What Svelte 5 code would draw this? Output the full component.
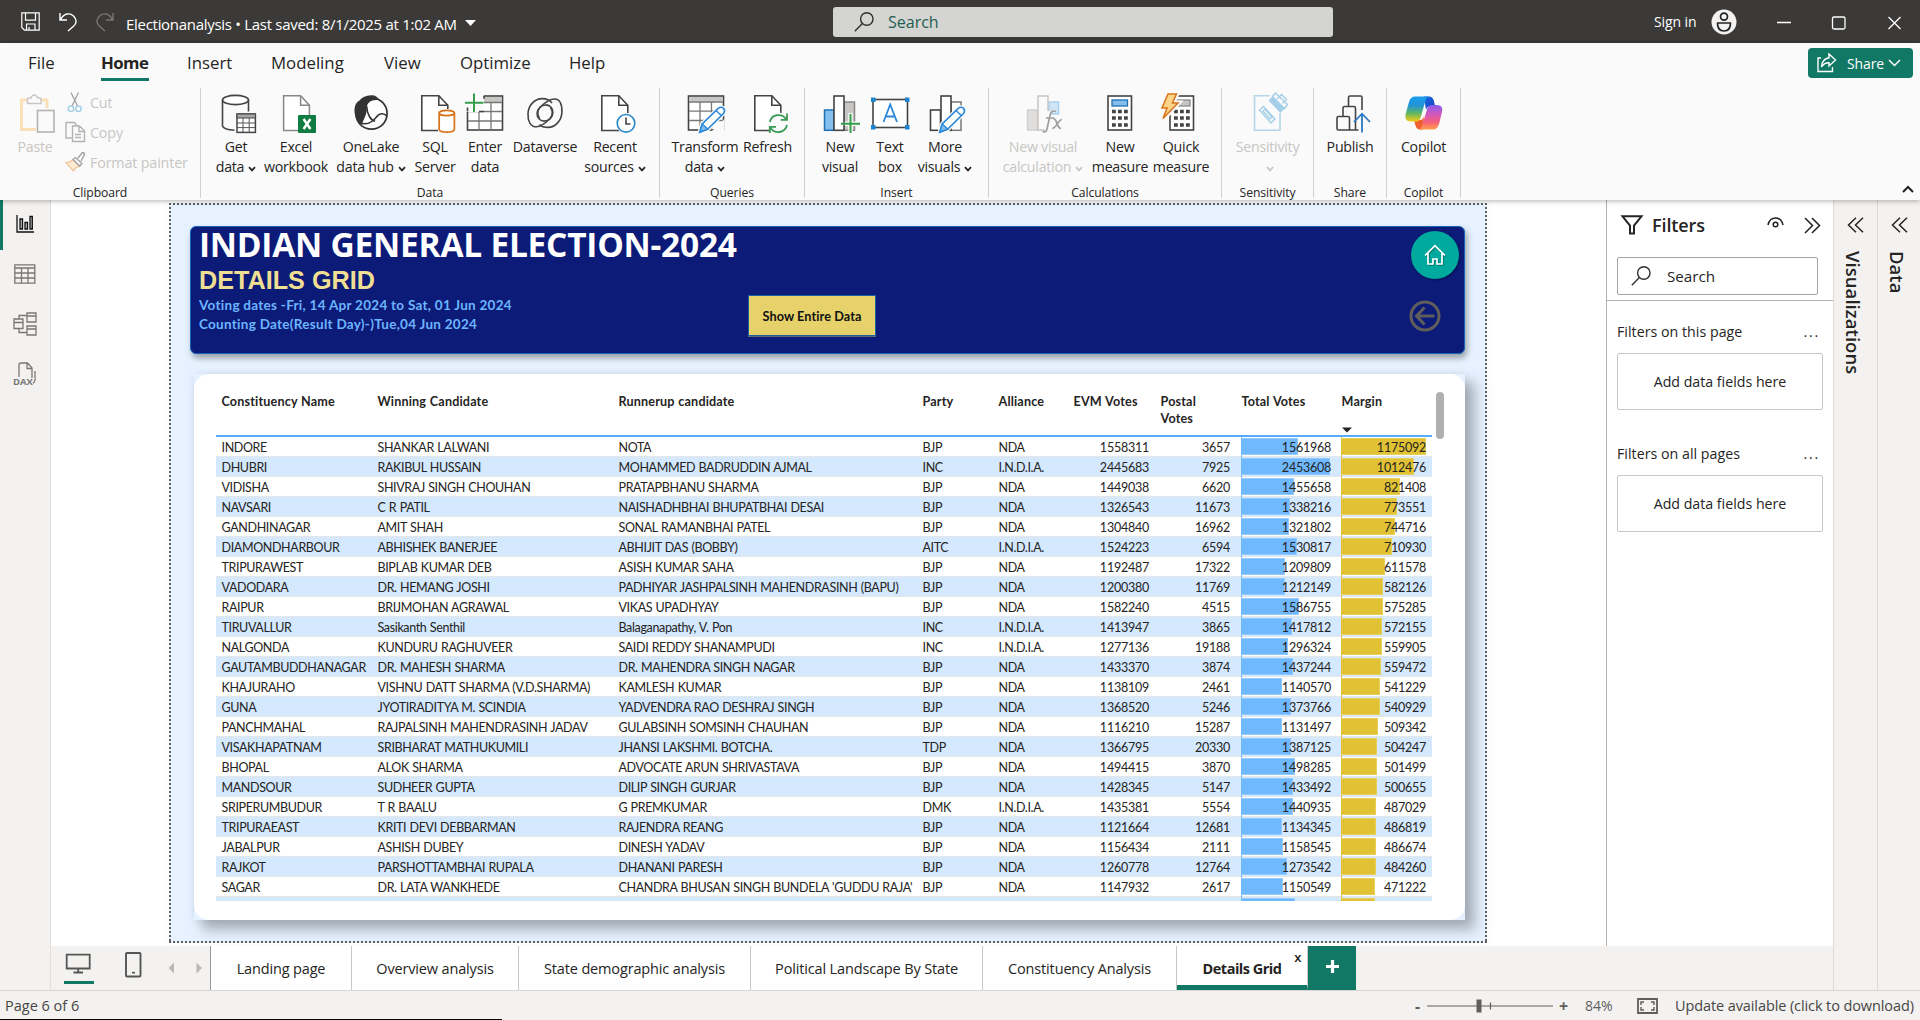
<script>
  const tabs = ['File', 'Home', 'Insert', 'Modeling', 'View', 'Optimize', 'Help'];

  const groups = [
    { name: 'Data', cls: 'g-data', items: [
      { icon: 'getdata', a: 'Get', b: 'data', menu: true, w: 60 },
      { icon: 'excel', a: 'Excel', b: 'workbook', w: 60 },
      { icon: 'onelake', a: 'OneLake', b: 'data hub', menu: true, w: 90 },
      { icon: 'sql', a: 'SQL', b: 'Server', w: 38 },
      { icon: 'enter', a: 'Enter', b: 'data', w: 62 },
      { icon: 'dataverse', a: 'Dataverse', w: 58 },
      { icon: 'recent', a: 'Recent', b: 'sources', menu: true, w: 82 }
    ] },
    { name: 'Queries', cls: 'g-queries', items: [
      { icon: 'transform', a: 'Transform', b: 'data', menu: true, w: 80 },
      { icon: 'refresh', a: 'Refresh', w: 45 }
    ] },
    { name: 'Insert', cls: 'g-insert', items: [
      { icon: 'newvisual', a: 'New', b: 'visual', w: 60 },
      { icon: 'textbox', a: 'Text', b: 'box', w: 40 },
      { icon: 'morevisuals', a: 'More', b: 'visuals', menu: true, w: 70 }
    ] },
    { name: 'Calculations', cls: 'g-calc', items: [
      { icon: 'newcalc', a: 'New visual', b: 'calculation', menu: true, off: true, w: 94 },
      { icon: 'measure', a: 'New', b: 'measure', w: 60 },
      { icon: 'quick', a: 'Quick', b: 'measure', w: 62 }
    ] },
    { name: 'Sensitivity', cls: 'g-sens', items: [{ icon: 'sensitivity', a: 'Sensitivity', b: '', menu: true, off: true, w: 91 }] },
    { name: 'Share', cls: 'g-share', items: [{ icon: 'publish', a: 'Publish', w: 72 }] },
    { name: 'Copilot', cls: 'g-copilot', items: [{ icon: 'copilot', a: 'Copilot', w: 73 }] }
  ];

  const rows = [
    ['INDORE', 'SHANKAR LALWANI', 'NOTA', 'BJP', 'NDA', 1558311, 3657, 1561968, 1175092],
    ['DHUBRI', 'RAKIBUL HUSSAIN', 'MOHAMMED BADRUDDIN AJMAL', 'INC', 'I.N.D.I.A.', 2445683, 7925, 2453608, 1012476],
    ['VIDISHA', 'SHIVRAJ SINGH CHOUHAN', 'PRATAPBHANU SHARMA', 'BJP', 'NDA', 1449038, 6620, 1455658, 821408],
    ['NAVSARI', 'C R PATIL', 'NAISHADHBHAI BHUPATBHAI DESAI', 'BJP', 'NDA', 1326543, 11673, 1338216, 773551],
    ['GANDHINAGAR', 'AMIT SHAH', 'SONAL RAMANBHAI PATEL', 'BJP', 'NDA', 1304840, 16962, 1321802, 744716],
    ['DIAMONDHARBOUR', 'ABHISHEK BANERJEE', 'ABHIJIT DAS (BOBBY)', 'AITC', 'I.N.D.I.A.', 1524223, 6594, 1530817, 710930],
    ['TRIPURAWEST', 'BIPLAB KUMAR DEB', 'ASISH KUMAR SAHA', 'BJP', 'NDA', 1192487, 17322, 1209809, 611578],
    ['VADODARA', 'DR. HEMANG JOSHI', 'PADHIYAR JASHPALSINH MAHENDRASINH (BAPU)', 'BJP', 'NDA', 1200380, 11769, 1212149, 582126],
    ['RAIPUR', 'BRIJMOHAN AGRAWAL', 'VIKAS UPADHYAY', 'BJP', 'NDA', 1582240, 4515, 1586755, 575285],
    ['TIRUVALLUR', 'Sasikanth Senthil', 'Balaganapathy, V. Pon', 'INC', 'I.N.D.I.A.', 1413947, 3865, 1417812, 572155],
    ['NALGONDA', 'KUNDURU RAGHUVEER', 'SAIDI REDDY SHANAMPUDI', 'INC', 'I.N.D.I.A.', 1277136, 19188, 1296324, 559905],
    ['GAUTAMBUDDHANAGAR', 'DR. MAHESH SHARMA', 'DR. MAHENDRA SINGH NAGAR', 'BJP', 'NDA', 1433370, 3874, 1437244, 559472],
    ['KHAJURAHO', 'VISHNU DATT SHARMA (V.D.SHARMA)', 'KAMLESH KUMAR', 'BJP', 'NDA', 1138109, 2461, 1140570, 541229],
    ['GUNA', 'JYOTIRADITYA M. SCINDIA', 'YADVENDRA RAO DESHRAJ SINGH', 'BJP', 'NDA', 1368520, 5246, 1373766, 540929],
    ['PANCHMAHAL', 'RAJPALSINH MAHENDRASINH JADAV', 'GULABSINH SOMSINH CHAUHAN', 'BJP', 'NDA', 1116210, 15287, 1131497, 509342],
    ['VISAKHAPATNAM', 'SRIBHARAT MATHUKUMILI', 'JHANSI LAKSHMI. BOTCHA.', 'TDP', 'NDA', 1366795, 20330, 1387125, 504247],
    ['BHOPAL', 'ALOK SHARMA', 'ADVOCATE ARUN SHRIVASTAVA', 'BJP', 'NDA', 1494415, 3870, 1498285, 501499],
    ['MANDSOUR', 'SUDHEER GUPTA', 'DILIP SINGH GURJAR', 'BJP', 'NDA', 1428345, 5147, 1433492, 500655],
    ['SRIPERUMBUDUR', 'T R BAALU', 'G PREMKUMAR', 'DMK', 'I.N.D.I.A.', 1435381, 5554, 1440935, 487029],
    ['TRIPURAEAST', 'KRITI DEVI DEBBARMAN', 'RAJENDRA REANG', 'BJP', 'NDA', 1121664, 12681, 1134345, 486819],
    ['JABALPUR', 'ASHISH DUBEY', 'DINESH YADAV', 'BJP', 'NDA', 1156434, 2111, 1158545, 486674],
    ['RAJKOT', 'PARSHOTTAMBHAI RUPALA', 'DHANANI PARESH', 'BJP', 'NDA', 1260778, 12764, 1273542, 484260],
    ['SAGAR', 'DR. LATA WANKHEDE', "CHANDRA BHUSAN SINGH BUNDELA 'GUDDU RAJA'", 'BJP', 'NDA', 1147932, 2617, 1150549, 471222],
    ['', '', '', '', '', '', '', 1480000, 470000]
  ];
  const maxTotal = 2453608;
  const maxMargin = 1175092;

  const pages = [
    { name: 'Landing page', w: 141 },
    { name: 'Overview analysis', w: 167 },
    { name: 'State demographic analysis', w: 232 },
    { name: 'Political Landscape By State', w: 232 },
    { name: 'Constituency Analysis', w: 194 }
  ];
</script>

{#snippet chev()}
  <svg class="chev" width="8" height="6" viewBox="0 0 8 6"><path d="M1 1.2 4 4.4 7 1.2" fill="none" stroke="currentColor" stroke-width="1.700" /></svg>
{/snippet}

{#snippet lens(s)}
  <svg width={s} height={s} viewBox="0 0 20 20" fill="none" stroke="#323130" stroke-width="1.4"><circle cx="12.8" cy="7" r="6.2" /><path d="M8.4 11.4.8 19.2" /></svg>
{/snippet}

{#snippet doc()}
  <path class="k" d="M6.8 2.8h17l9 9.5v25.2h-26z" fill="#fff" /><path class="k" d="M23.8 2.8v9.5h9" />
{/snippet}

{#snippet pencil()}
  <path d="M14.5 39.5 17 31 33.5 15.2q3-2 5 .2t.2 4.8L23 36.2z" fill="#fafafa" stroke="#fafafa" stroke-width="4" />
  <path d="M14.8 39.2 17.2 31 33.5 15.2q3-2 5 .2t.2 4.8L22.8 36z" fill="#fff" stroke="#2b88d8" stroke-width="1.6" />
  <path d="m14.8 39.2 2.4-8.2 5.6 5z" fill="#83beec" stroke="#2b88d8" stroke-width="1.4" /><path d="m31 17.5 5.5 5.2" stroke="#2b88d8" stroke-width="1.4" />
{/snippet}

{#snippet calc()}
  <rect class="k" x="8" y="3" width="23.5" height="34" fill="#fff" />
{/snippet}

{#snippet ribbonIcon(n)}
  <svg class="ico" width="40" height="40" viewBox="0 0 40 40" fill="none">
    {#if n === 'getdata'}
      <path class="k" d="M6.5 7v26q1 3.6 12 4.2M32.5 7v11.5" /><ellipse class="k" cx="19.5" cy="7" rx="13" ry="4.6" fill="#fff" />
      <rect x="21" y="21" width="18.4" height="18.4" fill="#fff" stroke="#444" stroke-width="1.5" /><rect x="21" y="21" width="18.4" height="4" fill="#a6a6a6" stroke="#444" stroke-width="1" />
      <path d="M27 25v14M33.2 25v14M21 30h18M21 34.6h18" stroke="#555" />
    {:else if n === 'excel'}
      <path d="M7.6 2.8h17l8.800 9.500v25.200H7.600z" fill="#fff" stroke="#8a8886" stroke-width="1.5" /><path d="M24.600 2.800v9.500h9" stroke="#8a8886" stroke-width="1.5" />
      <rect x="22" y="22" width="18" height="18" rx="1" fill="#107c41" /><path d="m27.600 26 6.800 10M34.400 26l-6.800 10" stroke="#fff" stroke-width="2.5" />
    {:else if n === 'onelake'}
      <circle cx="20.5" cy="20.5" r="15.6" stroke="#333" stroke-width="1.7" fill="#fff" />
      <path d="M20 2.2c4-.4 7 1.800 8.500 5C21 6 15.500 9 15.700 16c.1 6-2.700 9-4.700 15-6-4-8.500-10-7.200-17 .7-3.200 2.500-5.500 4.700-6.500C11 4.200 15 2.500 20 2.200z" fill="#333" />
      <path d="M15.600 13c.5 9 4.500 14.500 8.500 15.300M8 29.500c8 3.500 14-1 17-5 3-4.500 8-5 11-1" stroke="#333" stroke-width="1.600" />
    {:else if n === 'sql'}
      {@render doc()}
      <path d="M23 16h17v24H23z" fill="#fafafa" />
      <path d="M24.200 20v16.500q.8 2.600 7.600 2.600t7.600-2.600V20" stroke="#d8731a" stroke-width="1.700" fill="#fff" /><ellipse cx="31.800" cy="20" rx="7.600" ry="2.700" stroke="#d8731a" stroke-width="1.700" fill="#fff" />
    {:else if n === 'enter'}
      <rect class="k" x="2.500" y="3" width="35" height="34" fill="#fff" /><rect x="3.500" y="4" width="33.200" height="5" fill="#c8c6c4" />
      <path d="M3 9.500h34M3 18.500h34M3 28h34M14 9.500V37M26 9.500V37" stroke="#797775" stroke-width="1.300" />
      <path d="M-1 -1h20v20H-1z" fill="#fafafa" /><path class="k" d="M2.500 14.500v4M14 18.500h5M19 2.800v3" />
      <path d="M9 .5V19M0 9.700h18.500" stroke="#359f4c" stroke-width="2" />
    {:else if n === 'dataverse'}
      <path d="M14.500 25.500c-2.500-3.500-2.300-8.500.5-11.300 3-3 8-3 10.800-.2 3 3 3 8-1 11.800-3.500 3.500-8 8-13.300 8C5.500 34 2.600 28 3 20.500 3.400 12 10 5.600 17 5.600c4.500 0 8 1.500 10 4.500" class="k" />
      <path d="M25.500 14.500c2.500 3.500 2.300 8.500-.5 11.300-3 3-8 3-10.800.2-3-3-3-8 1-11.800C18.700 10.700 24 6 29.500 6c5.500 0 7.800 5.500 7.400 13.500C36.500 28 30 34.400 23 34.400c-4 0-7-1.200-8.500-3" class="k" />
    {:else if n === 'recent'}
      {@render doc()}
      <circle cx="31.500" cy="30.300" r="10.500" fill="#fafafa" /><circle cx="31" cy="30.300" r="8.800" fill="#fff" stroke="#2b88c8" stroke-width="1.600" /><path class="k" d="M31 24.500v6.500h4.500" />
    {:else if n === 'transform'}
      <rect class="k" x="3.500" y="3" width="35" height="34" fill="#fff" /><rect x="4" y="4" width="34" height="4.500" fill="#c8c6c4" />
      <path d="M4 9h34M4 18.200h34M4 27.500h34M15 9v28M26.500 9v28" stroke="#797775" stroke-width="1.300" />
      <path d="M27 38 39.500 26v14H27z" fill="#fafafa" />{@render pencil()}
    {:else if n === 'refresh'}
      {@render doc()}
      <circle cx="30.500" cy="30.500" r="11" fill="#fafafa" />
      <path d="M21.800 29a9 9 0 0 1 16.500-2.500M39 32a9 9 0 0 1-16.500 2.800M39 20.500v6.300h-6.200M21.800 40v-6.200H28" stroke="#3a9a55" stroke-width="1.800" />
    {:else if n === 'newvisual'}
      <rect x="4.500" y="17" width="9.500" height="20.300" fill="#83beec" stroke="#1f6fb2" stroke-width="1.500" />
      <rect x="24" y="9" width="10.500" height="28.300" fill="#c8c6c4" stroke="#8a8886" stroke-width="1.500" />
      <rect class="k" x="14" y="3" width="10" height="34.300" fill="#fff" />
      <path d="M30.500 20v21M24.800 30.800H41" stroke="#fafafa" stroke-width="4.500" />
      <path d="M30.500 21v19M21 30.800h19" stroke="#359f4c" stroke-width="2" />
    {:else if n === 'textbox'}
      <rect class="k" x="3" y="6.500" width="34.500" height="28" fill="#fff" />
      <path d="M1 4.500h4.500V9H1zM35 4.500h4.500V9H35zM1 32h4.500v4.500H1zM35 32h4.500v4.500H35z" fill="#1c84d0" />
      <path d="m13.500 29 6.700-17.500L27 29M15.800 23.500h9" stroke="#2b88d8" stroke-width="1.800" />
    {:else if n === 'morevisuals'}
      <rect class="k" x="5.500" y="17" width="10" height="20.300" fill="#fff" /><rect x="26" y="9" width="10" height="28.300" fill="#fff" stroke="#797775" stroke-width="1.500" /><rect class="k" x="16" y="3" width="10" height="34.300" fill="#fff" />
      {@render pencil()}
    {:else if n === 'newcalc'}
      <rect x="4.500" y="17" width="10" height="20" fill="#e1dfdd" stroke="#d2d0ce" stroke-width="1.500" /><rect x="26" y="9" width="9.500" height="12" fill="#cfe6f8" stroke="#a9d0ee" stroke-width="1.500" /><rect x="15" y="3" width="10" height="34" fill="#fafafa" stroke="#c8c6c4" stroke-width="1.500" />
      <path d="M21 18h7v22h-6z" fill="#fafafa" />
      <path d="M33 18.500q-5-2-6 4l-3 13.500q-.8 4-4.500 2.500M23 25h8.500M30.500 26.500c3.500-2 3 9 7.500 9M38.800 26.500c-3 0-6 9-9.500 9" stroke="#a19f9d" stroke-width="1.700" />
    {:else if n === 'measure'}
      {@render calc()}
      <rect x="12" y="7" width="15.500" height="6" fill="#83beec" stroke="#1f6fb2" stroke-width="1.300" />
      <path d="M12 18.500h16M12 25h16M12 32h16" stroke="#444" stroke-width="3.600" stroke-dasharray="3.800 2.200" />
    {:else if n === 'quick'}
      <g transform="translate(1 0)">{@render calc()}<rect x="14" y="7" width="14" height="6" fill="#c8c6c4" stroke="#8a8886" stroke-width="1.300" /><path d="M12 18.500h16M12 25h16M12 32h16" stroke="#444" stroke-width="3.600" stroke-dasharray="3.800 2.200" /></g>
      <path d="M7 .8h9L11.500 10H17L1.500 27 6 15H1z" fill="#fafafa" stroke="#fafafa" stroke-width="5" />
      <path d="M7 1h8.500L11.500 10H17L2 25.500 6 15H1z" fill="#fbd48a" stroke="#d8731a" stroke-width="1.500" />
    {:else if n === 'sensitivity'}
      <path d="M22 2.800H6.500v34.500h25.500V20" stroke="#b3d6ea" stroke-width="1.600" fill="#fafafa" />
      <path d="m11.500 17 4-3.500 11.500 12.500-4 4zM15 18l2-1.800 7 8-2 1.800z" stroke="#a5cfe8" stroke-width="1.400" />
      <path d="m20.500 7.500 4-4 12 12-4 4.500z" fill="#a5cfe8" /><path d="m24.500 3.500 3-3.500 12 11.500-3 4zM29 6l4.500-4.500 5 5-4 4" stroke="#a5cfe8" stroke-width="1.500" fill="#fafafa" />
    {:else if n === 'publish'}
      <path class="k" d="M28.500 37H8.500q-1.500 0-1.500-1.500V25q0-1.500 1.500-1.500H18q1.500 0 1.500 1.500v12M13 23V15q0-1.500 1.500-1.500H24q1.500 0 1.500 1.500v22M18.500 13V4.500Q18.500 3 20 3h10.500Q32 3 32 4.500V17" />
      <path d="M32 21v18.500M24 29l8-8.300 8 8.300" stroke="#2b79c2" stroke-width="1.800" />
    {:else if n === 'copilot'}
      <defs>
        <linearGradient id="ca" x1="0" y1="0" x2="0" y2="1"><stop offset="0" stop-color="#1b9df0" /><stop offset=".35" stop-color="#1f93d8" /><stop offset=".65" stop-color="#5bb56a" /><stop offset="1" stop-color="#f5cd12" /></linearGradient>
        <linearGradient id="cb" x1="0" y1="0" x2="0" y2="1"><stop offset="0" stop-color="#8a5cf0" /><stop offset=".4" stop-color="#d657b8" /><stop offset=".7" stop-color="#f7607a" /><stop offset="1" stop-color="#ffa04a" /></linearGradient>
        <linearGradient id="cc" x1="0" y1="0" x2="1" y2="1"><stop offset="0" stop-color="#1468e0" /><stop offset="1" stop-color="#1b3fc4" /></linearGradient>
      </defs>
      <path d="M20 3.500h5q3.500 0 4.800 4l1.200 5.500h-4q-4 0-5 4z" fill="url(#cc)" />
      <path d="M19 36.500h-3q-3.500 0-4.500-4L10 27h6q3 0 4-4z" fill="#f0602f" />
      <path d="M11 3.500h14q-2.500.5-3.500 4L16.500 25q-1 3.500-4.500 3.500H6.500q-6 0-5-7L5 9q1.500-5.500 6-5.500z" fill="url(#ca)" />
      <path d="M29 36.500H14.500q2.500-.5 3.500-4L23.500 15q1-3 4.500-3h5q6.500 0 5 7L35 31q-1.500 5.500-6 5.500z" fill="url(#cb)" />
    {/if}
  </svg>
{/snippet}

<div class="app">
  <header class="titlebar">
    <div class="quick">
      <svg width="19" height="19" viewBox="0 0 19 19" fill="none" stroke="#fff" stroke-width="1.200"><path d="M.8.8h17.400v17.400H3.500L.8 15.500zM4.500.8v7.400h10V.8M5.500 18v-6h8.500v6M8 15v3" /></svg>
      <svg width="18" height="20" viewBox="0 0 18 20" fill="none" stroke="#fff" stroke-width="1.400"><path d="M1 1v7h7M1.500 7.500C5 1 11 .5 14.500 4s3.500 7 0 10.200L9 19" /></svg>
      <svg width="18" height="20" viewBox="0 0 18 20" fill="none" stroke="#797775" stroke-width="1.400"><path d="M17 1v7h-7M16.500 7.500C13 1 7 .5 3.500 4S0 11 3.500 14.200L9 19" /></svg>
    </div>
    <div class="docname">Electionanalysis • Last saved: 8/1/2025 at 1:02 AM</div>
    <svg class="caret" width="11" height="6" viewBox="0 0 11 6"><path d="M0 0h11L5.500 6z" fill="#fff" /></svg>
    <div class="search">{@render lens(20)}<span>Search</span></div>
    <div class="signin">Sign in</div>
    <svg width="26" height="26" viewBox="0 0 26 26"><circle cx="13" cy="13" r="12.500" fill="#f3f2f1" /><circle cx="13" cy="7.600" r="3.500" fill="none" stroke="#222" stroke-width="1.700" /><path d="M6.500 14h13q0 8-6.500 8t-6.500-8z" fill="none" stroke="#222" stroke-width="1.700" stroke-linejoin="round" /></svg>
    <svg class="wc" width="125" height="16" viewBox="0 0 125 16" fill="none" stroke="#fff" stroke-width="1.300"><path d="M0 7.500h14M111.500 2l12 12M123.500 2l-12 12" /><rect x="55.500" y="2" width="12.500" height="12" rx="1.500" /></svg>
  </header>

  <section class="ribbon">
    <nav class="tabs">
      {#each tabs as t}<div class="tab t-{t.toLowerCase()}" class:on={t === 'Home'}>{t}</div>{/each}
      <div class="share">
        <svg width="20" height="20" viewBox="0 0 20 20" fill="none" stroke="#fff" stroke-width="1.400"><path d="M4 5H1v13.500h14.500V14M12 1l6.500 6L12 13V9.700Q7 9.500 4.500 14 5 6 12 4.800z" /></svg>
        <span>Share</span>
        <svg width="13" height="8" viewBox="0 0 13 8" fill="none" stroke="#fff" stroke-width="1.500"><path d="m1 1 5.500 5.500L12 1" /></svg>
      </div>
    </nav>
    <div class="groups">
      <div class="group g-clip">
        <div class="items">
          <div class="item off paste">
            <svg class="ico" width="40" height="40" viewBox="0 0 40 40" fill="none">
              <path d="M21 36.500H6.500V7H32v8" stroke="#fadfb8" stroke-width="3" /><path d="M12.500 10.500V6q0-1 1.500-1h2q1-3 3.300-3t3.300 3h2q1.500 0 1.500 1v4.500z" fill="#fafafa" stroke="#c8c6c4" stroke-width="1.500" /><rect x="22.500" y="17.500" width="16.500" height="21.500" fill="#fafafa" stroke="#b5b3b1" stroke-width="1.600" />
            </svg>
            <span>Paste</span>
          </div>
          <div class="clip off">
            <div><svg width="20" height="22" viewBox="0 0 20 22" fill="none"><path d="M6 1.500 12.500 15M13.500 1.500 7 15" stroke="#a19f9d" stroke-width="1.300" /><circle cx="6" cy="17.700" r="2.700" stroke="#a5cfe8" stroke-width="1.500" /><circle cx="13.500" cy="17.700" r="2.700" stroke="#a5cfe8" stroke-width="1.500" /></svg><span>Cut</span></div>
            <div><svg width="20" height="22" viewBox="0 0 20 22" fill="none" stroke="#b5b3b1" stroke-width="1.400"><path d="M7 17H1V1.500h8.500L12 5" /><path d="M7.500 5h7l5 5v10.500h-12zM14 5v5.500h5.500M10 13.500h6M10 16.500h6" /></svg><span>Copy</span></div>
            <div><svg width="20" height="22" viewBox="0 0 20 22" fill="none" stroke-width="1.300"><path d="M1 11.500q4 .5 7-3l7 6.500q-5 1-6.500 5z" fill="#fdebd3" stroke="#eec8a0" /><path d="m8 8.500 2.500-2 6.500 6-2.500 2.500zM13 7l4.500-5.500q2 0 2 2L16 10" fill="#fafafa" stroke="#a19f9d" /></svg><span>Format painter</span></div>
          </div>
        </div>
        <div class="gname">Clipboard</div>
      </div>
      {#each groups as g}
        <div class="group {g.cls}">
          <div class="items">
            {#each g.items as it}
              <div class="item" class:off={it.off} style:width="{it.w}px">
                {@render ribbonIcon(it.icon)}
                <span>{it.a}</span>
                {#if it.b !== undefined}<span>{it.b}{#if it.menu}{@render chev()}{/if}</span>{/if}
              </div>
            {/each}
          </div>
          <div class="gname">{g.name}</div>
        </div>
      {/each}
      <svg class="collapse" width="12" height="8" viewBox="0 0 12 8" fill="none" stroke="#222" stroke-width="2"><path d="m1 7 5-5 5 5" /></svg>
    </div>
  </section>

  <div class="body">
    <aside class="rail">
      <div class="r on"><svg width="18" height="18" viewBox="0 0 18 18" fill="none" stroke="#111" stroke-width="1.300"><path d="M1 0v17h17" /><path d="M4 4h2.500v10H4zM9 7.500h2.500V14H9zM14 1.500h2.300V14H14z" fill="#bbb" /></svg></div>
      <div class="r"><svg width="22" height="20" viewBox="0 0 22 20" fill="none" stroke="#797775" stroke-width="1.300"><path d="M.8.8h20v18.400H.8zM.8 4h20M.8 9h20M.8 14h20M7.500 4v15M14 4v15" /></svg></div>
      <div class="r"><svg width="24" height="24" viewBox="0 0 24 24" fill="none" stroke="#797775" stroke-width="1.300"><path d="M1 7h9v9.500H1zM1 10.500h9M14 1h9v9h-9zM14 4h9M14 14h9v9h-9zM14 17h9M6 7V3.500h8M6 16.500v4h8" /></svg></div>
      <div class="r"><svg width="24" height="24" viewBox="0 0 24 24" fill="none" stroke="#797775" stroke-width="1.300"><path d="M6 15V3q0-2 2-2h6.500L19 6v9q0 2-1.500 3M14 1v5.500h5M22 9v8q0 4-4 5.500" /><text x="0" y="22.500" class="dax">DAX</text></svg></div>
    </aside>

    <main class="main">
      <div class="upper">
        <div class="stage">
          <div class="page">
            <div class="banner">
              <div class="titles">
                <h1>INDIAN GENERAL ELECTION-2024</h1>
                <h2>DETAILS GRID</h2>
                <p>Voting dates -Fri, 14 Apr 2024 to Sat, 01 Jun 2024</p>
                <p>Counting Date(Result Day)-)Tue,04 Jun 2024</p>
              </div>
              <button class="showall">Show Entire Data</button>
              <div class="navs">
                <div class="home"><svg width="22" height="22" viewBox="0 0 22 22" fill="none" stroke="#fff" stroke-width="1.700"><path d="M1 11.500 11 1.700l10 9.800M4 9v11h5v-5h4v5h5V9" /></svg></div>
                <svg class="back" width="32" height="32" viewBox="0 0 32 32" fill="none" stroke="#605e5c" stroke-width="3"><circle cx="16" cy="16" r="14" /><path d="M25.500 16H8M15.500 7.500 7.500 16l8 8.500" /></svg>
              </div>
            </div>
            <div class="cardbox">
              <div class="card">
                <div class="grid">
                  <div class="row head">
                    <div>Constituency Name</div><div>Winning Candidate</div><div>Runnerup candidate</div><div>Party</div><div>Alliance</div><div>EVM Votes</div><div>Postal<br />Votes</div><div>Total Votes</div>
                    <div class="sorted">Margin<svg width="10" height="6" viewBox="0 0 10 6"><path d="M0 .5h10L5 5.500z" fill="#222" /></svg></div>
                  </div>
                  {#each rows as r, i}
                    <div class="row" class:alt={i % 2 === 1}>
                      {#each r as c, j}
                        {#if j < 5}<div>{c}</div>
                        {:else if j < 7}<div class="num">{c}</div>
                        {:else if j === 7}<div class="num barcell blue"><i class="bar" style:width="{(c / maxTotal) * 89}px"></i><span>{r[0] ? c : ''}</span></div>
                        {:else}<div class="num barcell gold"><i class="bar" style:width="{(c / maxMargin) * 85}px"></i><span>{r[0] ? c : ''}</span></div>{/if}
                      {/each}
                    </div>
                  {/each}
                </div>
                <div class="thumb"></div>
              </div>
            </div>
          </div>
        </div>
        <aside class="filters">
          <div class="fhead">
            <svg width="22" height="20" viewBox="0 0 22 20" fill="none" stroke="#252423" stroke-width="2"><path d="M1.500 1.300h19L13 10.500V18.500H9v-8z" /></svg>
            <b>Filters</b>
            <svg class="eye" width="17" height="11" viewBox="0 0 17 11" fill="none" stroke="#252423" stroke-width="1.500"><path d="M1 8Q2.500 1 8.500 1T16 8" /><circle cx="8.500" cy="7.500" r="2.300" /></svg>
            <svg width="17" height="17" viewBox="0 0 17 17" fill="none" stroke="#252423" stroke-width="1.500"><path d="m1 1 7.500 7.500L1 16M8 1l7.500 7.500L8 16" /></svg>
          </div>
          <div class="fsearch">{@render lens(20)}<span>Search</span></div>
          <div class="frule"></div>
          <div class="flabel"><span>Filters on this page</span><i>...</i></div>
          <div class="fbox">Add data fields here</div>
          <div class="flabel second"><span>Filters on all pages</span><i>...</i></div>
          <div class="fbox">Add data fields here</div>
        </aside>
      </div>
      <div class="pages">
        <div class="devices">
          <svg class="mon" width="30" height="32" viewBox="0 0 30 32" fill="none"><path d="M2.700 2.700h23v13.800h-23zM14.200 16.500v4M9.500 20.500h9.500" stroke="#555" stroke-width="1.800" /><path d="M0 29h30v3H0z" fill="#117865" /></svg>
          <svg class="phone" width="17" height="26" viewBox="0 0 17 26" fill="none"><rect x="1" y="1" width="14.500" height="23.500" rx="1" stroke="#555" stroke-width="1.900" /><path d="M7 20.700h3" stroke="#555" stroke-width="1.600" /></svg>
          <svg class="arrows" width="35" height="12" viewBox="0 0 35 12" fill="#bbb9b7"><path d="M6 .5v11L.5 6zM28.500.5v11L34 6z" /></svg>
        </div>
        {#each pages as p}<div class="pg" style:width="{p.w}px">{p.name}</div>{/each}
        <div class="pg active">Details Grid<span class="x">x</span></div>
        <div class="plus"><svg width="13" height="13" viewBox="0 0 13 13"><path d="M6.500 0v13M0 6.500h13" stroke="#fff" stroke-width="3.200" /></svg></div>
      </div>
    </main>

    {#each ['Visualizations', 'Data'] as pane}
      <aside class="pane">
        <svg width="17" height="16" viewBox="0 0 17 16" fill="none" stroke="#252423" stroke-width="1.500"><path d="M9 .8 1.500 8 9 15.200M16 .8 8.500 8l7.500 7.200" /></svg>
        <b>{pane}</b>
      </aside>
    {/each}
  </div>

  <footer class="status">
    <span class="pgno">Page 6 of 6</span>
    <div class="zoom">
      <b>-</b>
      <svg width="126" height="14" viewBox="0 0 126 14"><path d="M0 7h126M63.500 3.500v7" stroke="#605e5c" stroke-width="1.200" /><path d="M49.500.500h5v13h-5z" fill="#605e5c" /></svg>
      <b class="pl">+</b>
      <span>84%</span>
    </div>
    <svg class="fit" width="21" height="16" viewBox="0 0 21 16" fill="none" stroke="#605e5c"><path d="M1 1h19v14H1z" stroke-width="1.800" /><path d="M7 4H4v3M14 4h3v3M7 12H4V9M14 12h3V9" stroke-width="1.400" /></svg>
    <span class="upd">Update available (click to download)</span>
    <div class="progress"></div>
  </footer>
</div>

<style>
  :global(body) { margin: 0; overflow: hidden; }
  .app { width: 1920px; height: 1020px; display: flex; flex-direction: column; overflow: hidden; font-family: 'Open Sans', 'Noto Sans', sans-serif; color: #252423; background: #fff; white-space: nowrap; box-sizing: border-box; }
  .app :global(*) { box-sizing: border-box; }
  svg { display: block; flex: none; overflow: visible; }

  .titlebar { height: 43px; flex: none; background: #3b3a38; color: #fff; display: flex; align-items: center; font-size: 14px; }
  .quick { display: flex; gap: 19px; margin-left: 21px; width: 105px; align-items: center; }
  .docname { width: 331px; font-size: 15px; letter-spacing: -0.29px; padding-top: 5px; }
  .caret { margin-left: 8px; margin-top: 3px; }
  .search { margin-left: 357px; width: 500px; height: 30px; background: #d4d4d2; border-radius: 3px; display: flex; align-items: center; color: #1f5c4f; font-size: 16px; letter-spacing: 0; }
  .search svg { margin-left: 21px; margin-right: 14px; }
  .signin { margin-left: 321px; width: 57px; letter-spacing: -0.1px; }
  .wc { margin-left: 40px; margin-top: 3px; }

  .ribbon { height: 157px; flex: none; background: #fafafa; position: relative; z-index: 2; box-shadow: 0 1px 5px rgba(0, 0, 0, 0.3); }
  .tabs { height: 45px; display: flex; align-items: flex-start; padding-left: 28px; font-size: 16.800px; }
  .tab { height: 38px; line-height: 39px; letter-spacing: 0; }
  .tab.on { font-weight: 700; border-bottom: 3px solid #117865; letter-spacing: -0.6px; }
  .t-file { width: 73px; }
  .t-home { width: 48px; margin-right: 38px; }
  .t-insert { width: 84px; }
  .t-modeling { width: 113px; }
  .t-view { width: 76px; }
  .t-optimize { width: 109px; }
  .t-help { width: 60px; }
  .share { margin-left: auto; margin-right: 7px; margin-top: 5px; width: 105px; height: 30px; border-radius: 4px; background: #117865; color: #fff; display: flex; align-items: center; font-size: 14px; letter-spacing: -0.1px; padding-left: 9px; }
  .share span { margin-left: 10px; margin-right: 4px; }

  .groups { display: flex; height: 110px; }
  .group { border-right: 1px solid #d2d0ce; display: flex; flex-direction: column; }
  .g-clip { width: 201px; }
  .g-data { width: 459px; }
  .g-data .items { padding-left: 5px; }
  .g-queries { width: 145px; }
  .g-queries .items { padding-left: 5px; }
  .g-insert { width: 184px; }
  .g-insert .items { padding-left: 5px; }
  .g-calc { width: 233px; }
  .g-calc .items { padding-left: 7px; }
  .g-sens { width: 92px; }
  .g-share { width: 73px; }
  .g-copilot { width: 74px; }
  .items { display: flex; height: 94px; padding-top: 5px; }
  .item { display: flex; flex-direction: column; align-items: center; font-size: 14.200px; letter-spacing: -0.25px; line-height: 20px; flex: none; }
  .item span { display: flex; align-items: center; height: 20px; }
  .ico { margin-bottom: 4px; }
  .chev { margin-left: 4px; margin-top: 4px; }
  .off { color: #c8c6c4; }
  .gname { text-align: center; font-size: 12.200px; letter-spacing: -0.1px; line-height: 16px; margin-top: 3px; height: 13px; }
  .paste { width: 70px; }
  .clip { font-size: 14.300px; letter-spacing: -0.15px; margin: -6px 0 0 -5px; }
  .clip div { display: flex; height: 30px; align-items: center; gap: 5px; }
  .collapse { margin-left: auto; align-self: flex-end; margin-right: 6px; margin-bottom: 5px; }
  .k { stroke: #444; stroke-width: 1.600; }

  .body { height: 791px; flex: none; display: flex; border-bottom: 1px solid #d8d6d4; }
  .rail { width: 51px; background: #f3f2f1; border-right: 1px solid #e1dfdd; }
  .r { height: 50px; display: flex; align-items: center; justify-content: center; }
  .r.on { border-left: 3px solid #117865; padding-right: 3px; }
  .r svg { margin-top: -2px; }
  .dax { font: 700 9.500px 'Open Sans', sans-serif; fill: #797775; stroke: #f3f2f1; stroke-width: 2px; paint-order: stroke; }

  .main { flex: 1; display: flex; flex-direction: column; }
  .upper { height: 746px; display: flex; }
  .stage { flex: 1; padding: 3px 0 0 118px; }
  .page { width: 1318px; height: 740px; padding: 23px 22px 0 21px; background:
      repeating-linear-gradient(90deg, #5f5f5f 0 2px, transparent 2px 4px) 0 0 / 100% 2px no-repeat,
      repeating-linear-gradient(90deg, #5f5f5f 0 2px, transparent 2px 4px) 0 100% / 100% 2px no-repeat,
      repeating-linear-gradient(#5f5f5f 0 2px, transparent 2px 4px) 0 0 / 2px 100% no-repeat,
      repeating-linear-gradient(#5f5f5f 0 2px, transparent 2px 4px) 100% 0 / 2px 100% no-repeat,
      #e6f2ff; box-shadow: 0 0 14px rgba(0, 0, 0, 0.03); }
  .banner { height: 128px; background: #0c1b77; border: 1px solid #1464b8; border-radius: 6px; box-shadow: 2px 4px 6px rgba(0, 0, 0, 0.35); display: flex; }
  .titles { width: 557px; padding-left: 8px; }
  h1 { margin: 0; color: #fff; font-size: 33.500px; line-height: 35px; font-weight: 700; letter-spacing: -0.25px; }
  h2 { margin: 3px 0 1px; color: #f0df92; font: 700 25.200px/30px 'Liberation Sans', Arial, sans-serif; }
  p { margin: 0; color: #6cb5ff; font: 700 13.500px/19px Lato, sans-serif; letter-spacing: 0.28px; }
  .showall { width: 128px; height: 41px; margin-top: 68px; padding: 0; border: 1px solid #1b5f9e; box-shadow: 0 1px 0 #5f6b74; background: #e6d16a; font: 700 12.700px Lato, sans-serif; letter-spacing: 0.08px; color: #111; white-space: nowrap; }
  .navs { margin-left: auto; margin-right: 5px; padding-top: 4px; }
  .home { width: 48px; height: 48px; border-radius: 50%; background: #00a99d; display: flex; align-items: center; justify-content: center; box-shadow: 1px 1px 2px #061050; }
  .home svg { filter: drop-shadow(1px 1px 0 rgba(0, 0, 0, 0.3)); }
  .back { margin-top: 21px; margin-left: -2px; }

  .cardbox { height: 546px; margin: 20px 0 0 4px; background: #e6f2ff; box-shadow: 9px 9px 12px 1px rgba(0, 0, 0, 0.27), 0 0 9px rgba(0, 0, 0, 0.08); }
  .card { height: 546px; border-radius: 15px; background: #fff; display: flex; padding: 18px 0 0 22px; }
  .grid { width: 1216px; height: 509px; overflow: hidden; font-family: Lato, Carlito, sans-serif; font-size: 12.500px; letter-spacing: -0.36px; word-spacing: 0.5px; }
  .row { display: grid; grid-template-columns: 156px 241px 304px 76px 75px 87px 81px 100px 95px; height: 20px; line-height: 21px; border-bottom: 1px solid #e4e6e8; }
  .row > div { padding-left: 5.500px; }
  .row > .num { text-align: right; padding: 0 6px 0 0; letter-spacing: -0.23px; }
  .alt { background: #d4e8fe; }
  .head { height: 45px; border-bottom: 2px solid #58acff; line-height: 17px; font-size: 12.600px; font-weight: 700; letter-spacing: 0.16px; }
  .row.head > div { padding-top: 1px; }
  .row.head .sorted svg { margin-top: 17px; }
  .row > .barcell { display: grid; padding: 0 5px 0 5px; }
  .barcell > * { grid-area: 1 / 1; }
  .bar { height: 17px; margin-top: 1px; display: block; }
  .blue { background: linear-gradient(#70b9ff, #70b9ff) 5px 0 / 1px 100% no-repeat; }
  .gold { background: linear-gradient(#e0c234, #e0c234) 5px 0 / 1px 100% no-repeat; }
  .blue .bar { background: #70b9ff; border: 1px solid #92caff; border-left: 0; }
  .gold .bar { background: #e0c234; border: 1px solid #e8cf5a; border-left: 0; }
  .thumb { width: 8px; height: 47px; border-radius: 4px; background: #b0b0b0; margin-left: 4px; }

  .filters { width: 227px; border-left: 1px solid #b3b0ad; background: #fff; padding-left: 10px; }
  .fhead { display: flex; align-items: center; height: 50px; padding-left: 4px; }
  .fhead b { margin-left: 9px; width: 115px; font-size: 18px; font-weight: 600; letter-spacing: -0.1px; }
  .eye { margin-right: 20px; margin-top: -5px; }
  .fsearch { margin-top: 7px; width: 201px; height: 38px; border: 1px solid #a6a4a2; border-radius: 2px; display: flex; align-items: center; font-size: 15.200px; padding-left: 13px; gap: 16px; }
  .frule { height: 1px; background: #b3b0ad; margin: 5px 0 0 -10px; }
  .flabel { display: flex; justify-content: space-between; width: 201px; height: 20px; line-height: 20px; margin-top: 21px; font-size: 14.200px; letter-spacing: 0.03px; }
  .flabel i { font-style: normal; letter-spacing: 1.800px; margin-right: -2px; }
  .flabel.second { margin-top: 34px; }
  .fbox { margin-top: 11px; width: 206px; height: 57px; border: 1px solid #c8c6c4; border-radius: 2px; display: flex; align-items: center; justify-content: center; font-size: 14.200px; }

  .pages { height: 44px; background: #f3f2f1; display: flex; font-size: 14.500px; }
  .devices { width: 160px; display: flex; border-right: 1px solid #999; }
  .mon { margin: 6px 0 0 13px; }
  .phone { margin: 6px 0 0 31px; }
  .arrows { margin: 16px 0 0 26px; }
  .pg { background: #fff; border-right: 1px solid #c8c6c4; display: flex; align-items: center; justify-content: center; letter-spacing: -0.15px; padding-top: 1px; }
  .pg.active { width: 131px; font-weight: 700; border-bottom: 5px solid #117865; position: relative; letter-spacing: -0.5px; padding-top: 5px; }
  .x { position: absolute; right: 6px; top: 2px; font-size: 13px; font-weight: 600; }
  .plus { width: 48px; background: #117865; display: flex; align-items: center; justify-content: center; padding-bottom: 3px; }

  .pane { width: 44px; background: #f3f2f1; border-left: 1px solid #dddbd9; display: flex; flex-direction: column; align-items: center; padding-top: 17px; }
  .pane:last-child { width: 43px; }
  .pane b { writing-mode: vertical-rl; font-weight: 600; font-size: 18.400px; margin-top: 18px; letter-spacing: 0.1px; line-height: 22px; margin-right: 5px; }

  .status { flex: 1; background: #f3f2f1; display: flex; align-items: center; font-size: 14.500px; color: #484644; position: relative; }
  .pgno { width: 1410px; padding-left: 5px; }
  .zoom { display: flex; align-items: center; color: #605e5c; font-size: 14px; letter-spacing: 0; width: 227px; padding-left: 5px; }
  .zoom b { width: 12px; font-size: 16px; }
  .zoom .pl { margin-left: 6px; width: 26px; }
  .fit { margin-right: 17px; }
  .upd { letter-spacing: -0.1px; }
  .progress { position: absolute; left: 0; bottom: 0; width: 502px; height: 1px; background: #000; }
</style>
